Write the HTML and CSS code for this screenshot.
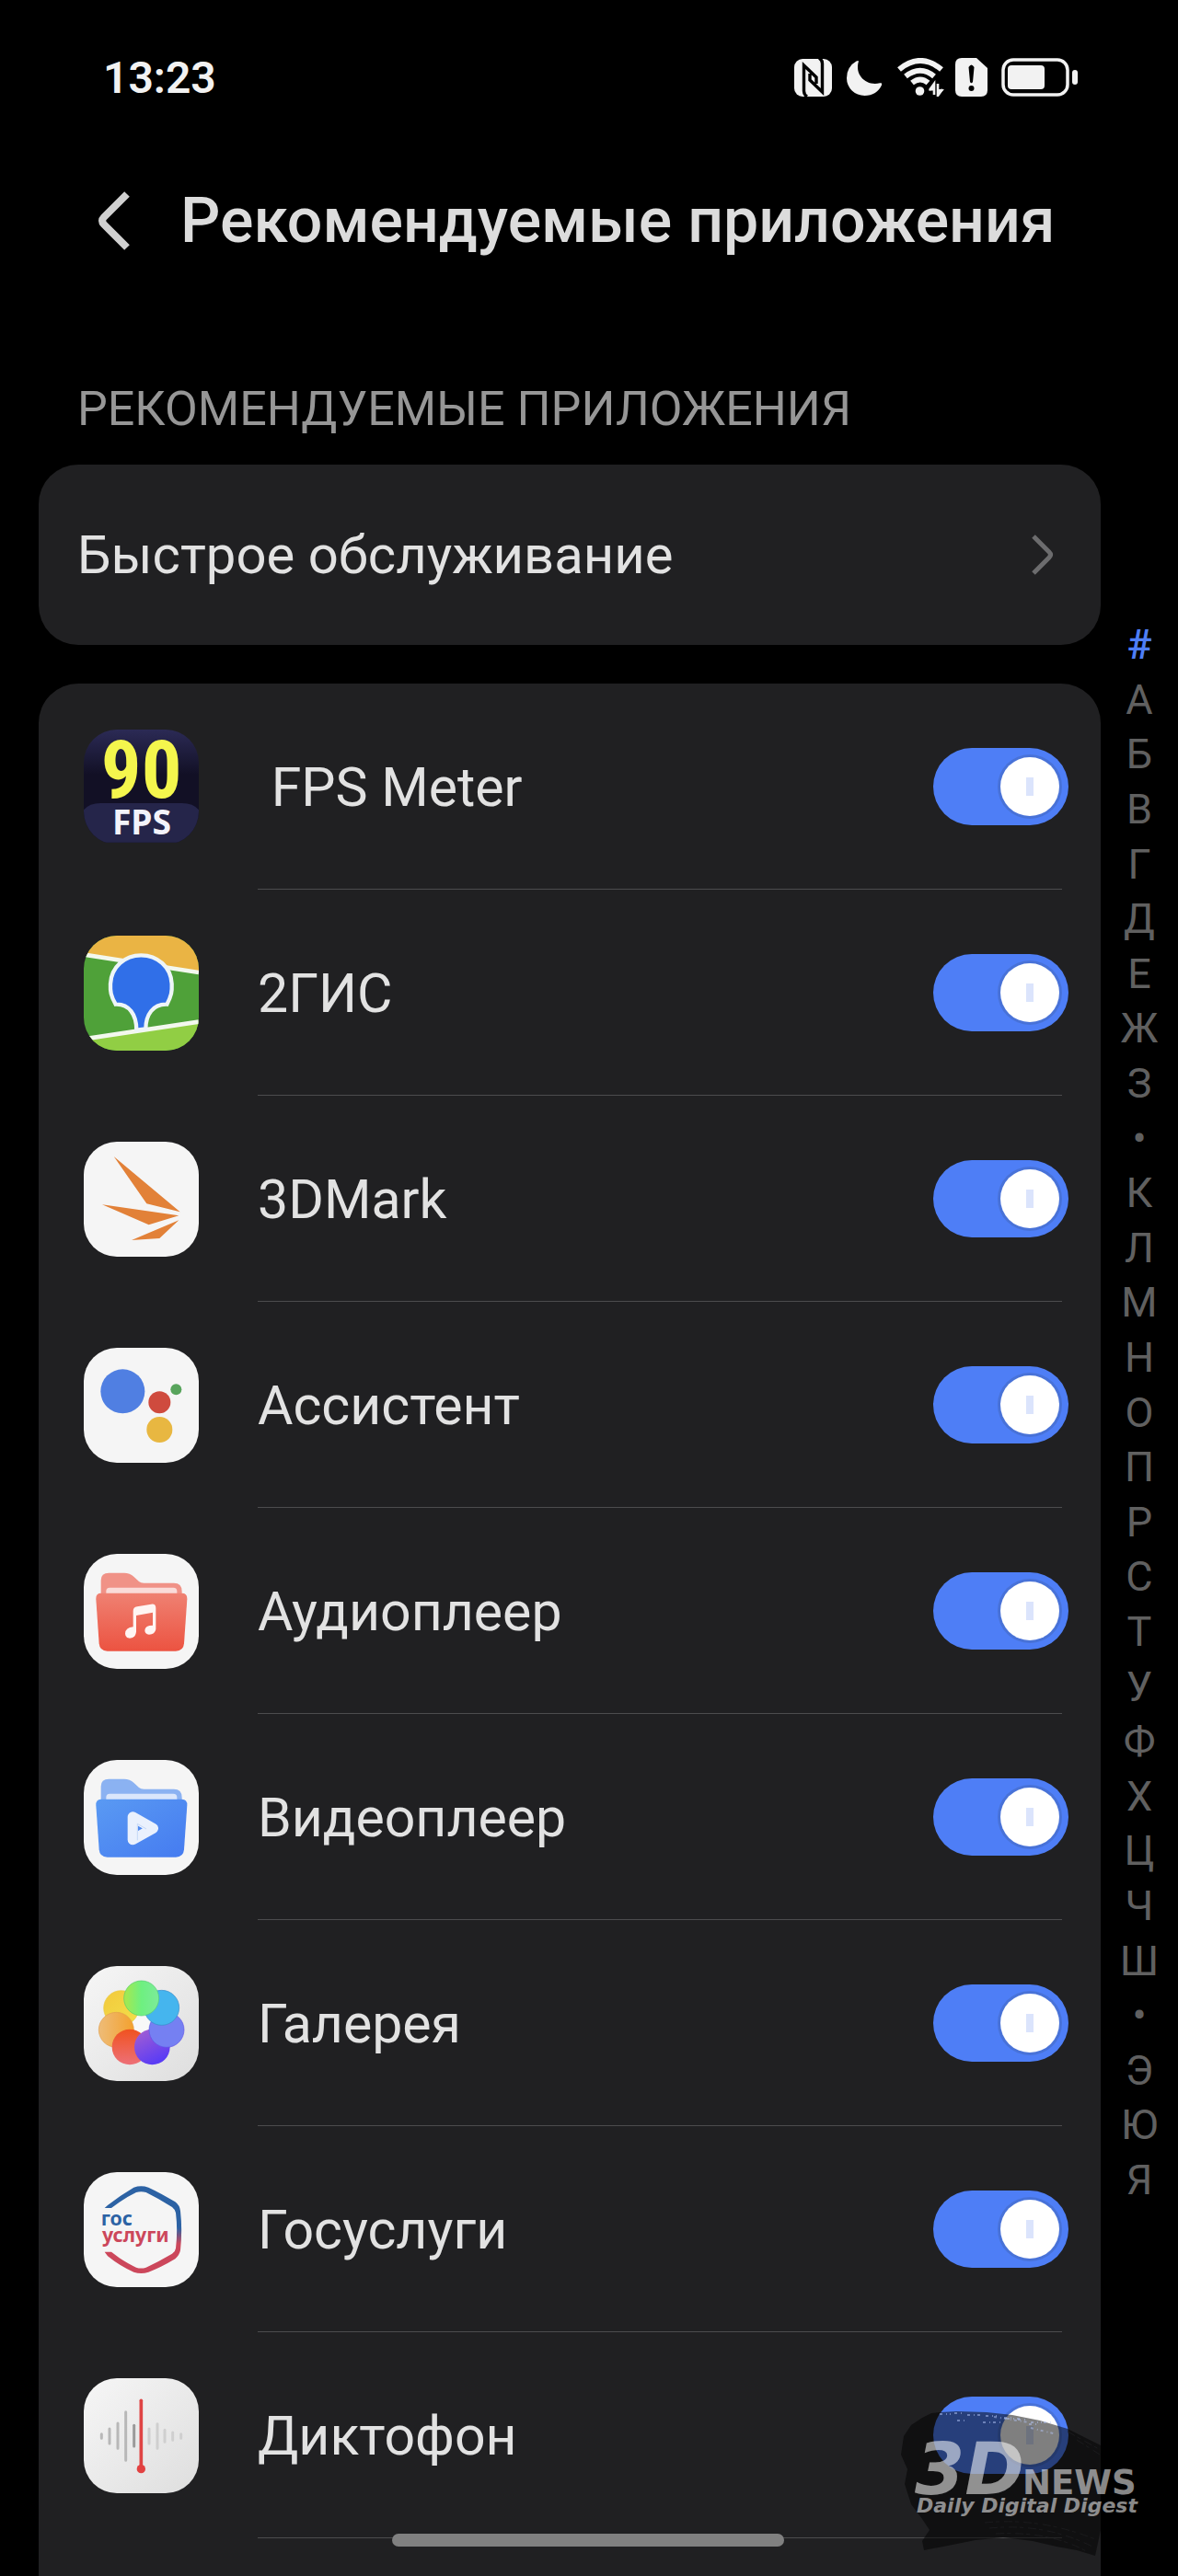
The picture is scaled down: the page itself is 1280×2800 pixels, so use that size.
FILE: index.html
```html
<!DOCTYPE html>
<html lang="ru">
<head>
<meta charset="utf-8">
<meta name="viewport" content="width=device-width, initial-scale=1">
<title>Рекомендуемые приложения</title>
<link rel="stylesheet" href="styles.css">
</head>
<body>
<div class="status">
  <time class="clock">13:23</time>
  <div class="status-icons">
    <svg width="44" height="42" viewBox="0 0 44 42" aria-label="NFC"><rect x="1" y="1" width="41" height="41" rx="9" fill="#f2f2f2"/><path d="M15 42Q11.500 40 11.500 36V8L25 21V28M28 0Q31.500 2 31.500 6V37L18 24V17" fill="none" stroke="#000" stroke-width="3.400"/></svg>
    <svg width="44" height="42" viewBox="0 0 44 42" fill="#f2f2f2" aria-label="Не беспокоить"><path d="M15 3.500C14.500 2.800 14 2.800 12.500 3.500A20 20 0 0 0 2 22A19.500 19 0 0 0 21.500 41C30 41 37 36.500 40 29.500C40.500 27.500 39.800 27 38 27.300C24 31 10 19 15 3.500Z"/></svg>
    <svg width="52" height="42" viewBox="0 0 52 42" aria-label="Wi-Fi"><g fill="none" stroke="#f2f2f2" stroke-width="6"><path d="M3 12.500Q26-6.500 49 12.500"/><path d="M10 20Q26 7.500 41 20"/><path d="M17 27Q26 20 34.500 27"/></g><circle cx="25.500" cy="36" r="4.800" fill="#f2f2f2"/><path d="M36 35l5-7v12M50 34l-5 7V28" fill="none" stroke="#f2f2f2" stroke-width="2.600"/><path d="M35 35.500l6-7v7zM45 34h7l-7 7z" fill="#f2f2f2"/></svg>
    <svg width="38" height="42" viewBox="0 0 38 42" aria-label="SIM"><path d="M7 0H23L35 11V35Q35 42 28 42H7Q0 42 0 35V7Q0 0 7 0Z" fill="#f2f2f2"/><path d="M14.500 10Q17.500 5 20.500 10L19 26Q17.500 28.500 16 26Z"/><circle cx="17.500" cy="33" r="3"/></svg>
    <svg width="84" height="42" viewBox="0 0 84 42" aria-label="Батарея"><rect x="2" y="2" width="70" height="38" rx="11" fill="none" stroke="#f2f2f2" stroke-width="3.500"/><rect x="7" y="8" width="40" height="26" rx="4" fill="#f2f2f2"/><rect x="77" y="13" width="6" height="16" rx="3" fill="#f2f2f2"/></svg>
  </div>
</div>

<header class="header">
  <button class="back" type="button" aria-label="Назад"><svg width="36" height="64" viewBox="0 0 36 64"><path d="M32 3L7 28Q3 32 7 36L32 61" fill="none" stroke="#d0d0d0" stroke-width="8"/></svg></button>
  <h1>Рекомендуемые приложения</h1>
</header>

<div class="content">
  <main class="main">
    <h2>РЕКОМЕНДУЕМЫЕ ПРИЛОЖЕНИЯ</h2>
    <a class="card quick" href="#quick">Быстрое обслуживание
      <svg width="26" height="44" viewBox="0 0 26 44"><path d="M3 2L20 19Q23 22 20 25L3 42" fill="none" stroke="#6c6c6e" stroke-width="5"/></svg></a>

    <ul class="card apps">
      <li class="app">
        <svg class="icon" viewBox="0 0 375 375"><defs><linearGradient id="fps" x2="0" y2="1"><stop offset="0" stop-color="#2b2a55"/><stop offset=".4" stop-color="#121025"/></linearGradient></defs><rect width="375" height="368" fill="url(#fps)"/><path d="M0 368V262Q18 240 55 240H320Q357 240 375 262V368Z" fill="#25254a"/><text class="fps-number" x="188" y="222">90</text><text class="fps-label" x="189" y="341">FPS</text></svg>
        <div class="line"><label for="a1">&nbsp;FPS Meter</label><input class="switch" type="checkbox" role="switch" id="a1" checked></div>
      </li>
      <li class="app">
        <svg class="icon" viewBox="0 0 375 375"><rect width="375" height="375" fill="#4fa139"/><path d="M0 0H375V120L0 62Z" fill="#eab444"/><path d="M0 336L375 280V375H0Z" fill="#91ce44"/><path d="M0 62L375 120M0 337L375 281" stroke="#f3f8ee" stroke-width="14"/><path d="M104 224C88 196 86 182 87 157C90 102 134 64 187 64C240 64 284 102 287 157C288 182 286 196 271 224C226 222 202 258 202 304L172 308C172 258 148 222 104 224Z" fill="#306fe8" stroke="#eef5f8" stroke-width="13"/></svg>
        <div class="line"><label for="a2">2ГИС</label><input class="switch" type="checkbox" role="switch" id="a2" checked></div>
      </li>
      <li class="app">
        <svg class="icon" viewBox="0 0 375 375"><rect width="375" height="375" fill="#f5f5f5"/><path d="M98 48L314 229L205 202ZM60 205L310 241L212 271ZM310 256L247 315L156 321Z" fill="#e28138"/></svg>
        <div class="line"><label for="a3">3DMark</label><input class="switch" type="checkbox" role="switch" id="a3" checked></div>
      </li>
      <li class="app">
        <svg class="icon" viewBox="0 0 375 375"><rect width="375" height="375" fill="#f5f5f5"/><circle cx="127" cy="142" r="72" fill="#507fe2"/><circle cx="247" cy="178" r="36" fill="#cf4b3e"/><circle cx="301" cy="136" r="18" fill="#58a45c"/><circle cx="247" cy="267" r="42" fill="#e8b741"/></svg>
        <div class="line"><label for="a4">Ассистент</label><input class="switch" type="checkbox" role="switch" id="a4" checked></div>
      </li>
      <li class="app">
        <svg class="icon" viewBox="0 0 375 375"><defs><linearGradient id="red" x2="0" y2="1"><stop offset="0" stop-color="#ef8172"/><stop offset="1" stop-color="#ec5341"/></linearGradient></defs><rect width="375" height="375" fill="#f5f5f5"/><path d="M56 150V86Q56 62 82 62H132Q150 62 163 74L180 90Q186 95 196 95H294Q320 95 320 122V150Z" fill="#f09287"/><path d="M73 145V122Q73 110 85 110H292Q304 110 304 122V145Z" fill="#fadcd9"/><path d="M56 128H320Q338 128 337 148L327 292Q325 317 300 317H77Q52 317 50 292L40 148Q39 128 56 128Z" fill="url(#red)"/><path d="M161 238V187Q161 174 174 172L220 164Q235 162 235 177V246Q232 263 213 263Q199 262 199 249Q200 233 225 233V191L171 201V254Q168 275 150 275Q135 274 135 260Q136 240 161 238Z" fill="#fff5f3"/></svg>
        <div class="line"><label for="a5">Аудиоплеер</label><input class="switch" type="checkbox" role="switch" id="a5" checked></div>
      </li>
      <li class="app">
        <svg class="icon" viewBox="0 0 375 375"><defs><linearGradient id="blue" x2="1" y2="1"><stop offset="0" stop-color="#5a9af3"/><stop offset="1" stop-color="#457bf0"/></linearGradient></defs><rect width="375" height="375" fill="#f5f5f5"/><path d="M56 150V86Q56 62 82 62H132Q150 62 163 74L180 90Q186 95 196 95H294Q320 95 320 122V150Z" fill="#8bb2f2"/><path d="M73 145V122Q73 110 85 110H292Q304 110 304 122V145Z" fill="#dae6fb"/><path d="M56 128H320Q338 128 337 148L327 292Q325 317 300 317H77Q52 317 50 292L40 148Q39 128 56 128Z" fill="url(#blue)"/><path d="M160 186V260L226 223Z" fill="none" stroke="#eaf1fd" stroke-width="34" stroke-linejoin="round"/><path d="M175 208V262M175 208L204 225" fill="none" stroke="#c5d8f6" stroke-width="3"/></svg>
        <div class="line"><label for="a6">Видеоплеер</label><input class="switch" type="checkbox" role="switch" id="a6" checked></div>
      </li>
      <li class="app">
        <svg class="icon" viewBox="0 0 375 375"><defs><linearGradient id="grey" x2="1" y2="1"><stop offset="0" stop-color="#f6f6f6"/><stop offset="1" stop-color="#dedede"/></linearGradient><linearGradient id="p1"><stop offset="0" stop-color="#a8e84c"/><stop offset=".5" stop-color="#6ef080"/><stop offset="1" stop-color="#7deb9a"/></linearGradient><linearGradient id="p2" y2="1"><stop offset="0" stop-color="#f3c93c"/><stop offset="1" stop-color="#f2e04a"/></linearGradient><linearGradient id="p3"><stop offset="0" stop-color="#eebc78"/><stop offset="1" stop-color="#f3a12e"/></linearGradient><linearGradient id="p4" x2="0" y2="1"><stop offset="0" stop-color="#f0521f"/><stop offset="1" stop-color="#ed7078"/></linearGradient><linearGradient id="p5" x2=".5" y2="1"><stop offset="0" stop-color="#a860d0"/><stop offset="1" stop-color="#5a3cf5"/></linearGradient></defs><rect width="375" height="375" fill="url(#grey)"/><circle cx="187" cy="193" r="52" fill="#f8f8f8"/><g stroke-width="2"><circle cx="122" cy="137" r="57" fill="url(#p2)" stroke="#e8ca45"/><circle cx="106" cy="208" r="57" fill="url(#p3)" stroke="#e3a04d"/><circle cx="150" cy="264" r="58" fill="url(#p4)"/><circle cx="223" cy="264" r="58" fill="url(#p5)"/><circle cx="270" cy="208" r="57" fill="#7580f2" stroke="#6254e8"/><circle cx="254" cy="136" r="57" fill="#45b5ee" stroke="#398bc8"/><circle cx="188" cy="105" r="57" fill="url(#p1)" stroke="#55cf70"/></g></svg>
        <div class="line"><label for="a7">Галерея</label><input class="switch" type="checkbox" role="switch" id="a7" checked></div>
      </li>
      <li class="app">
        <svg class="icon" viewBox="0 0 375 375"><defs><linearGradient id="flag" x2="0" y2="1"><stop offset=".48" stop-color="#2c62a4"/><stop offset=".66" stop-color="#cc475b"/></linearGradient></defs><rect width="375" height="375" fill="#f5f5f5"/><path d="M68 117L78 108Q120 75 163 50Q187 42 211 50Q250 68 298 97Q313 108 315 127Q322 190 315 254Q313 268 298 283Q250 312 211 326Q187 334 163 326Q120 308 78 274L68 260H90L116 280Q146 300 171 311Q187 316 203 311Q244 292 288 266Q299 258 300 248Q307 190 300 133Q299 123 288 114Q244 86 203 66Q187 61 171 66Q146 78 116 98L90 117Z" fill="url(#flag)"/><text class="gos" x="56" y="175" fill="#2c62a4">гос</text><text class="gos" x="60" y="228" fill="#cc475b">услуги</text></svg>
        <div class="line"><label for="a8">Госуслуги</label><input class="switch" type="checkbox" role="switch" id="a8" checked></div>
      </li>
      <li class="app">
        <svg class="icon" viewBox="0 0 375 375"><rect width="375" height="375" fill="url(#grey)"/><g stroke-width="9" stroke-linecap="round" fill="none"><path d="M58 182V196M84 165V213M111 147V229M137 110V268" stroke="#b8b8b8"/><path d="M164 154V222" stroke="#9a9a9a"/><path d="M213 165V213M240 149V229M264 169V208M290 177V202M317 182V196" stroke="#cfcfcf"/></g><path d="M187 73V290" stroke="#df4444" stroke-width="11" stroke-linecap="round"/><circle cx="187" cy="296" r="14" fill="#e24141"/></svg>
        <div class="line"><label for="a9">Диктофон</label><input class="switch" type="checkbox" role="switch" id="a9" checked></div>
      </li>
    </ul>
  </main>

  <nav class="index" aria-label="Алфавит">
    <a class="current" href="#n">#</a><a href="#n">А</a><a href="#n">Б</a><a href="#n">В</a><a href="#n">Г</a><a href="#n">Д</a><a href="#n">Е</a><a href="#n">Ж</a><a href="#n">З</a><a href="#n">•</a><a href="#n">К</a><a href="#n">Л</a><a href="#n">М</a><a href="#n">Н</a><a href="#n">О</a><a href="#n">П</a><a href="#n">Р</a><a href="#n">С</a><a href="#n">Т</a><a href="#n">У</a><a href="#n">Ф</a><a href="#n">Х</a><a href="#n">Ц</a><a href="#n">Ч</a><a href="#n">Ш</a><a href="#n">•</a><a href="#n">Э</a><a href="#n">Ю</a><a href="#n">Я</a>
  </nav>
</div>

<div class="home-bar"></div>

<svg class="watermark" width="300" height="180" viewBox="960 2600 300 180" aria-label="3DNews">
  <path d="M1002 2628L1012 2623L1022 2622L1040 2621L1072 2622L1100 2625L1130 2631L1160 2640L1196 2658L1240 2682V2740L1196 2750L1190 2778L1170 2772L1148 2768L1122 2762L1090 2758L1060 2761L1030 2767L1004 2772L1002 2762L1010 2750L1002 2738L990 2722L983 2700L986 2684L979 2668L982 2648L990 2636Z" fill="#000" fill-opacity=".5"/>
  <g class="speckle"><path d="M1021 2624h12m4-1h8m6 2h14m6 1h12m8 2h9m6 2h8m6 3h12"/><path d="M1040 2631h10m18 2h20m6-4h14m10 6h10m6-2h10"/><path d="M1120 2639l28 7M1080 2627l38 6"/></g>
  <g class="dry"><path d="M1075 2748q60-6 112 20M1082 2754q60-3 100 20M1070 2742q60-6 120 18M1160 2643l34 19M1170 2652l25 16"/></g>
  <g fill="#fff" fill-opacity=".54"><text class="mark-big" x="994" y="2711">3D</text><text class="mark-news" x="1111" y="2711">NEWS</text><text class="mark-tag" x="996" y="2731">Daily Digital Digest</text></g>
</svg>
</body>
</html>
```
FILE: styles.css
```css
* { box-sizing: border-box; }

body {
  position: relative;
  display: flex;
  flex-direction: column;
  min-height: 100vh;
  margin: 0;
  background: #000;
  color: #e2e2e2;
  font-family: Roboto, "Noto Sans", sans-serif;
  font-size: 58px;
}

a { color: inherit; text-decoration: none; }
svg { display: block; flex: none; }

.status {
  display: flex;
  align-items: center;
  justify-content: space-between;
  height: 168px;
  padding: 0 108px 0 112px;
}
.clock { color: #f2f2f2; font-size: 48px; font-weight: 600; }
.status-icons { display: flex; gap: 12px; }

.header {
  display: flex;
  align-items: center;
  gap: 54px;
  height: 144px;
  padding: 0 106px;
}
.back { padding: 0; border: 0; background: none; }
h1 { margin: 0; color: #dcdcdc; font-size: 68px; font-weight: 500; line-height: 84px; white-space: nowrap; }

.content { display: flex; flex: 1; }
.main { display: flex; flex: 1; flex-direction: column; padding-left: 42px; }
h2 {
  margin: 0;
  padding: 103px 0 30px 42px;
  color: #969696;
  font-size: 52px;
  font-weight: 400;
  line-height: 60px;
}

.card { border-radius: 43px; background: #202022; }
.quick {
  display: flex;
  align-items: center;
  justify-content: space-between;
  height: 196px;
  padding: 0 50px 0 42px;
}
.apps {
  flex: 1;
  margin: 42px 0 0;
  padding: 0;
  border-radius: 43px 43px 0 0;
  font-size: 59px;
  list-style: none;
}
.app { display: flex; align-items: center; gap: 64px; height: 224px; padding: 0 42px 0 49px; }
.icon { width: 125px; height: 125px; border-radius: 36px; }
.line {
  display: flex;
  flex: 1;
  align-items: center;
  justify-content: space-between;
  height: 224px;
  border-bottom: 1px solid #4c4c4e;
}
.line label { padding-top: 2px; }

.switch {
  appearance: none;
  width: 147px;
  height: 84px;
  margin: 0 -7px 0 0;
  padding: 10px;
  border-radius: 42px;
  background: #4e7ef6;
}
.switch::before {
  content: "";
  display: block;
  width: 64px;
  height: 64px;
  margin-left: 63px;
  border-radius: 50%;
  background: linear-gradient(#dbe4fc, #dbe4fc) center / 8px 20px no-repeat #fff;
  box-shadow: 0 0 0 3px #4872d8;
}
.switch:not(:checked) { background: #555; }
.switch:not(:checked)::before { margin-left: 0; }

.index {
  display: flex;
  flex-direction: column;
  width: 84px;
  height: 1728px;
  margin-top: 359px;
  color: #606060;
  font-size: 45px;
  text-align: center;
}
.index a { display: flex; flex: 1; align-items: center; justify-content: center; }
.index .current { color: #4e7ef6; font-weight: 500; }

.home-bar {
  position: absolute;
  bottom: 32px;
  left: 50%;
  width: 426px;
  height: 14px;
  margin-left: -214px;
  border-radius: 7px;
  background: #808080;
}
.watermark { position: absolute; right: 20px; bottom: 20px; pointer-events: none; }

.speckle path { fill: none; stroke: #b4c6f8; stroke-opacity: .5; stroke-width: 2; stroke-dasharray: 3 4 1 3; }
.dry path { fill: none; stroke: #202022; stroke-opacity: .7; stroke-width: 1; stroke-dasharray: 9 3 4 5; }
.mark-big, .mark-news, .mark-tag { font-family: "DejaVu Sans", sans-serif; font-weight: 700; }
.mark-big { font-size: 78px; font-style: italic; }
.mark-news { font-size: 37px; }
.mark-tag { font-size: 22px; font-style: italic; }

.fps-number { fill: #f4f64d; font-family: "Roboto Condensed", "Liberation Sans Narrow", Roboto, sans-serif; font-size: 260px; font-weight: 700; text-anchor: middle; }
.fps-label { fill: #f3f3fa; font-family: "Noto Sans", sans-serif; font-size: 112px; font-weight: 700; text-anchor: middle; }
.gos { font-family: "Noto Sans", sans-serif; font-size: 64px; font-weight: 700; }
```
